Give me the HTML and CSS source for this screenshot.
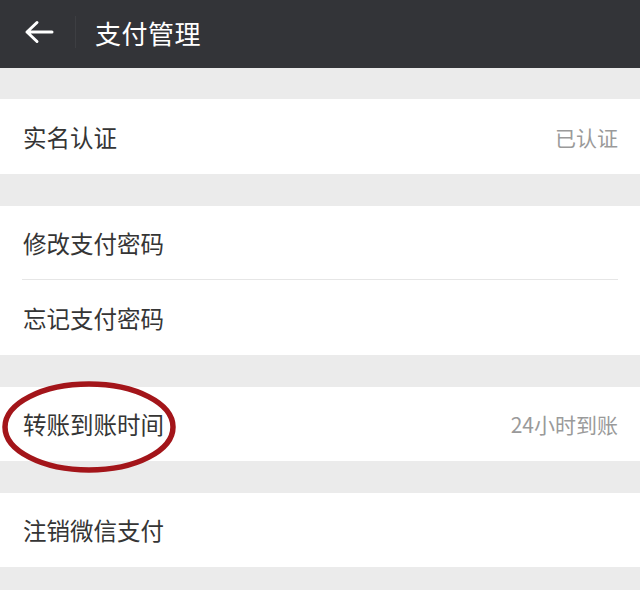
FILE: index.html
```html
<!DOCTYPE html>
<html lang="zh">
<head>
<meta charset="utf-8">
<title>支付管理</title>
<link rel="stylesheet" href="styles.css">
</head>
<body>
<header class="topbar">
  <span class="back">
    <svg width="30" height="24" viewBox="0 0 30 24"><path d="M3 12H28M3 12L13 2.5M3 12L13 21.5" fill="none" stroke="#fff" stroke-width="3" stroke-linecap="round" stroke-linejoin="round"/></svg>
  </span>
  <span class="divider"></span>
  <h1 class="title">支付管理</h1>
</header>
<main class="content">
  <section class="group first">
    <div class="row"><span class="label">实名认证</span><span class="value">已认证</span></div>
  </section>
  <section class="group">
    <div class="row sep"><span class="label">修改支付密码</span></div>
    <div class="row"><span class="label">忘记支付密码</span></div>
  </section>
  <section class="group">
    <div class="row marked">
      <span class="label">转账到账时间</span><span class="value">24小时到账</span>
      <svg class="circle" width="180" height="96" viewBox="0 0 180 96"><ellipse cx="88" cy="48" rx="84" ry="43" fill="none" stroke="#a3151a" stroke-width="5.5"/></svg>
    </div>
  </section>
  <section class="group">
    <div class="row"><span class="label">注销微信支付</span></div>
  </section>
</main>
</body>
</html>
```
FILE: styles.css
```css
html, body {
  margin: 0;
  padding: 0;
  background: #ebebeb;
  font-family: "Noto Sans CJK SC", "Noto Sans", sans-serif;
}
.topbar {
  height: 68px;
  background: #333438;
  display: flex;
  align-items: center;
  box-sizing: border-box;
  padding-left: 24px;
  padding-bottom: 4px;
}
.back {
  display: flex;
  width: 30px;
  height: 24px;
}
.divider {
  width: 1px;
  height: 32px;
  background: #3d3e42;
  margin-left: 21px;
}
.title {
  margin: 0 0 0 19px;
  font-size: 26px;
  font-weight: 400;
  color: #ffffff;
  letter-spacing: 0.5px;
}
.content {
  padding-top: 31px;
  display: flex;
  flex-direction: column;
  gap: 32px;
  padding-bottom: 23px;
}
.group {
  background: #ffffff;
}
.row {
  height: 74px;
  display: flex;
  align-items: center;
  justify-content: space-between;
  padding: 0 22px 0 23px;
  box-sizing: border-box;
  position: relative;
}
.group.first .row {
  height: 75px;
}
.row.sep::after {
  content: "";
  position: absolute;
  left: 22px;
  right: 22px;
  bottom: 0;
  height: 1px;
  background: #e6e6e6;
}
.group .row + .row {
  height: 75px;
}
.label {
  font-size: 23.5px;
  color: #353535;
}
.value {
  font-size: 21px;
  color: #9a9a9a;
}
.circle {
  position: absolute;
  left: 1px;
  top: -8px;
}
```
